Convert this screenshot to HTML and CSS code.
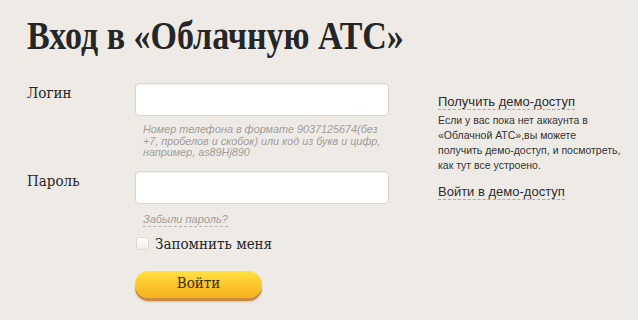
FILE: index.html
```html
<!DOCTYPE html>
<html lang="ru">
<head>
<meta charset="utf-8">
<title>Вход в «Облачную АТС»</title>
<link rel="stylesheet" href="styles.css">
</head>
<body>
<div class="page">
  <h1 class="title">Вход в «Облачную АТС»</h1>
  <div class="main">
    <form class="form">
      <div class="row">
        <label class="label" for="login">Логин</label>
        <div class="field">
          <input class="input" id="login" type="text">
          <p class="hint">Номер телефона в формате 9037125674(без<br>+7, пробелов и скобок) или код из букв и цифр,<br>например, as89Hj890</p>
        </div>
      </div>
      <div class="row row-pass">
        <label class="label" for="pass">Пароль</label>
        <div class="field">
          <input class="input" id="pass" type="password">
          <a class="forgot" href="#">Забыли пароль?</a>
          <label class="remember"><span class="check"></span>Запомнить меня</label>
          <button class="btn" type="button">Войти</button>
        </div>
      </div>
    </form>
    <aside class="side">
      <a class="side-link" href="#">Получить демо-доступ</a>
      <p class="side-text">Если у вас пока нет аккаунта в<br>«Облачной АТС»,вы можете<br>получить демо-доступ, и посмотреть,<br>как тут все устроено.</p>
      <a class="side-link" href="#">Войти в демо-доступ</a>
    </aside>
  </div>
</div>
</body>
</html>
```
FILE: styles.css
```css
html, body {
  margin: 0;
  padding: 0;
  background: #eeebe7;
}
.page {
  width: 638px;
  height: 317px;
  box-sizing: border-box;
  padding: 14px 0 0 27px;
  background: #eeebe7;
  color: #2b2b2b;
}
.title {
  display: inline-block;
  margin: 0;
  font-family: "Liberation Serif", "Times New Roman", serif;
  font-weight: bold;
  font-size: 40px;
  line-height: 44px;
  color: #262626;
  transform: scaleX(0.85);
  transform-origin: left center;
  white-space: nowrap;
}
.main {
  display: flex;
  margin-top: 25px;
}
.form {
  width: 362px;
  margin: 0;
}
.row {
  display: flex;
}
.row-pass {
  margin-top: 12px;
}
.label {
  width: 108px;
  font-family: "DejaVu Serif", serif;
  font-stretch: condensed;
  font-size: 15px;
  line-height: 20px;
  color: #262626;
}
.field {
  width: 254px;
  display: flex;
  flex-direction: column;
  align-items: flex-start;
}
.input {
  width: 254px;
  height: 33px;
  box-sizing: border-box;
  margin: 0;
  border: 1px solid #d8d5d1;
  border-radius: 4px;
  background: #fff;
  box-shadow: inset 0 1px 1px rgba(0,0,0,0.06);
  outline: none;
}
.hint {
  margin: 8px 0 0 8px;
  font-family: "Liberation Sans", Arial, sans-serif;
  font-style: italic;
  font-size: 10.8px;
  line-height: 11.5px;
  color: #a29d98;
  white-space: nowrap;
}
.forgot {
  margin: 9px 0 0 8px;
  font-family: "Liberation Sans", Arial, sans-serif;
  font-style: italic;
  font-size: 11px;
  line-height: 13px;
  color: #a29d98;
  text-decoration: none;
  border-bottom: 1px dashed #b8b3ad;
}
.remember {
  display: flex;
  align-items: center;
  margin-top: 9px;
  font-family: "DejaVu Serif", serif;
  font-stretch: condensed;
  font-size: 15px;
  line-height: 16px;
  color: #262626;
}
.check {
  width: 11px;
  height: 11px;
  margin: 0 6px 0 1px;
  border: 1px solid #dcd9d5;
  border-radius: 2px;
  background: linear-gradient(#fff, #f1efec);
}
.btn {
  margin-top: 19px;
  width: 127px;
  height: 27px;
  border: none;
  border-radius: 14px;
  background: linear-gradient(#ffe23f, #fbc22a 60%, #f6b21f);
  box-shadow: 0 3px 0 #c98a3f, 0 4px 2px rgba(120,70,20,0.25);
  font-family: "DejaVu Serif", serif;
  font-stretch: condensed;
  font-size: 15px;
  color: #3a2c12;
  padding: 0 0 2px;
  cursor: pointer;
}
.side {
  margin-left: 49px;
  width: 200px;
  padding-top: 9px;
}
.side-link {
  display: inline-block;
  font-family: "Liberation Sans", Arial, sans-serif;
  font-size: 13px;
  line-height: 14px;
  color: #2b2b2b;
  text-decoration: none;
  border-bottom: 1px dashed #aaa59f;
}
.side-text {
  margin: 3px 0 9px;
  font-family: "Liberation Sans", Arial, sans-serif;
  font-size: 10.5px;
  line-height: 15px;
  color: #333;
  white-space: nowrap;
}
```
